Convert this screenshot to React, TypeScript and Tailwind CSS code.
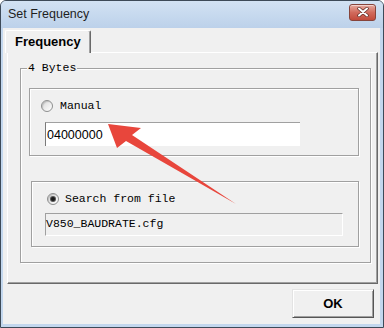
import React from "react";

function Radio({ checked }: { checked?: boolean }) {
  return (
    <span className="flex h-[12px] w-[12px] shrink-0 items-center justify-center rounded-full border border-[#8e8f8f] bg-gradient-to-br from-[#d9d9d9] to-white shadow-[inset_1px_1px_1px_rgba(0,0,0,0.15)]">
      {checked && <span className="h-[4px] w-[4px] rounded-full bg-[#1a1a1a] ring-1 ring-[#555]" />}
    </span>
  );
}

function CloseIcon() {
  return (
    <svg width="12" height="10" viewBox="0 0 12 10" aria-hidden="true">
      <path d="M2 1.5 L10 8.5 M10 1.5 L2 8.5" stroke="#5a2a24" strokeWidth="3.4" strokeLinecap="round" />
      <path d="M2 1.5 L10 8.5 M10 1.5 L2 8.5" stroke="#ffffff" strokeWidth="2" strokeLinecap="round" />
    </svg>
  );
}

const mono = "font-['Liberation_Mono',monospace] text-[11.5px] leading-none text-black";

export default function App() {
  return (
    <div className="relative h-[328px] w-[384px] overflow-hidden bg-white font-['Liberation_Sans',Arial,sans-serif]">
      <div className="flex h-full flex-col rounded-t-[6px] border border-[#3d4a58] bg-[#c3d7ee]">
        {/* title bar */}
        <div className="flex h-[27px] shrink-0 items-center justify-between rounded-t-[5px] bg-gradient-to-b from-[#d2e2f3] to-[#bcd1ea] pl-[7px] pr-[7px]">
          <span className="text-[12.5px] text-[#1e1e1e]">Set Frequency</span>
          <button className="mt-[-5px] flex h-[17px] w-[27px] items-center justify-center rounded-[3px] border border-[#86443b] bg-gradient-to-b from-[#e5a99f] via-[#d16a5c] to-[#c24a3b] shadow-[inset_0_1px_0_rgba(255,255,255,0.5)]">
            <CloseIcon />
          </button>
        </div>

        {/* client area */}
        <div className="mb-[3px] ml-[2px] mr-[3px] flex flex-1 flex-col bg-[#f0f0f0]">
          {/* tab strip */}
          <div className="flex pl-[2px] pt-[2px]">
            <div className="relative z-10 -mb-px flex h-[23px] w-[86px] items-start rounded-t-[2px] border-l border-t border-r border-l-white border-t-white border-r-[#696969] bg-[#f0f0f0] pl-[9px] pt-[3px] shadow-[inset_-1px_0_0_#a0a0a0]">
              <span className="text-[13px] font-bold leading-[15px] text-black">Frequency</span>
            </div>
          </div>

          {/* tab page */}
          <div className="ml-[4px] h-[232px] w-[371px] border border-l-white border-t-white border-r-[#696969] border-b-[#696969] shadow-[inset_-1px_-1px_0_#a0a0a0]">
            {/* group 4 Bytes */}
            <div className="relative ml-[12px] mt-[15px] h-[195px] w-[351px] border border-[#a0a0a0] shadow-[1px_1px_0_#fff,inset_1px_1px_0_#fff]">
              <span className={`absolute left-[6px] top-[-7px] bg-[#f0f0f0] px-[1px] ${mono}`}>4 Bytes</span>

              {/* Manual box */}
              <div className="ml-[8px] mt-[19px] h-[68px] w-[330px] border border-[#a0a0a0] shadow-[1px_1px_0_#fff,inset_1px_1px_0_#fff]">
                <div className="ml-[11px] mt-[10px] flex h-[13px] items-center gap-[7px]">
                  <Radio />
                  <span className={mono}>Manual</span>
                </div>
                <div className="ml-[15px] mt-[10px] flex h-[24px] w-[255px] items-start border-l border-t border-l-[#7a7a7a] border-t-[#a0a0a0] bg-white pl-px pt-[6px]">
                  <span className="text-[12.5px] leading-none text-black">04000000</span>
                </div>
              </div>

              {/* Search from file box */}
              <div className="ml-[10px] mt-[25px] h-[66px] w-[328px] border border-[#a0a0a0] shadow-[1px_1px_0_#fff,inset_1px_1px_0_#fff]">
                <div className="ml-[15px] mt-[10px] flex h-[13px] items-center gap-[6px]">
                  <Radio checked />
                  <span className={mono}>Search from file</span>
                </div>
                <div className="ml-[13px] mt-[8px] flex h-[23px] w-[298px] items-start border border-l-[#a0a0a0] border-t-[#a0a0a0] border-r-white border-b-white bg-[#f0f0f0] pt-[4px]">
                  <span className={mono}>V850_BAUDRATE.cfg</span>
                </div>
              </div>
            </div>
          </div>

          {/* buttons */}
          <div className="mr-[6px] mt-[5px] flex justify-end">
            <button className="flex h-[29px] w-[82px] items-center justify-center border border-l-[#e3e3e3] border-t-[#e3e3e3] border-r-[#555] border-b-[#555] bg-[#f0f0f0] shadow-[inset_1px_1px_0_#fff,inset_-1px_-1px_0_#a0a0a0]">
              <span className="text-[13px] font-bold text-black">OK</span>
            </button>
          </div>
        </div>
      </div>

      {/* annotation arrow */}
      <svg className="pointer-events-none absolute left-0 top-0" width="384" height="328" aria-hidden="true">
        <polygon
          points="108,124 141,128 132,135 236,204 126,141 117,148"
          fill="#e8463c"
        />
      </svg>
    </div>
  );
}
